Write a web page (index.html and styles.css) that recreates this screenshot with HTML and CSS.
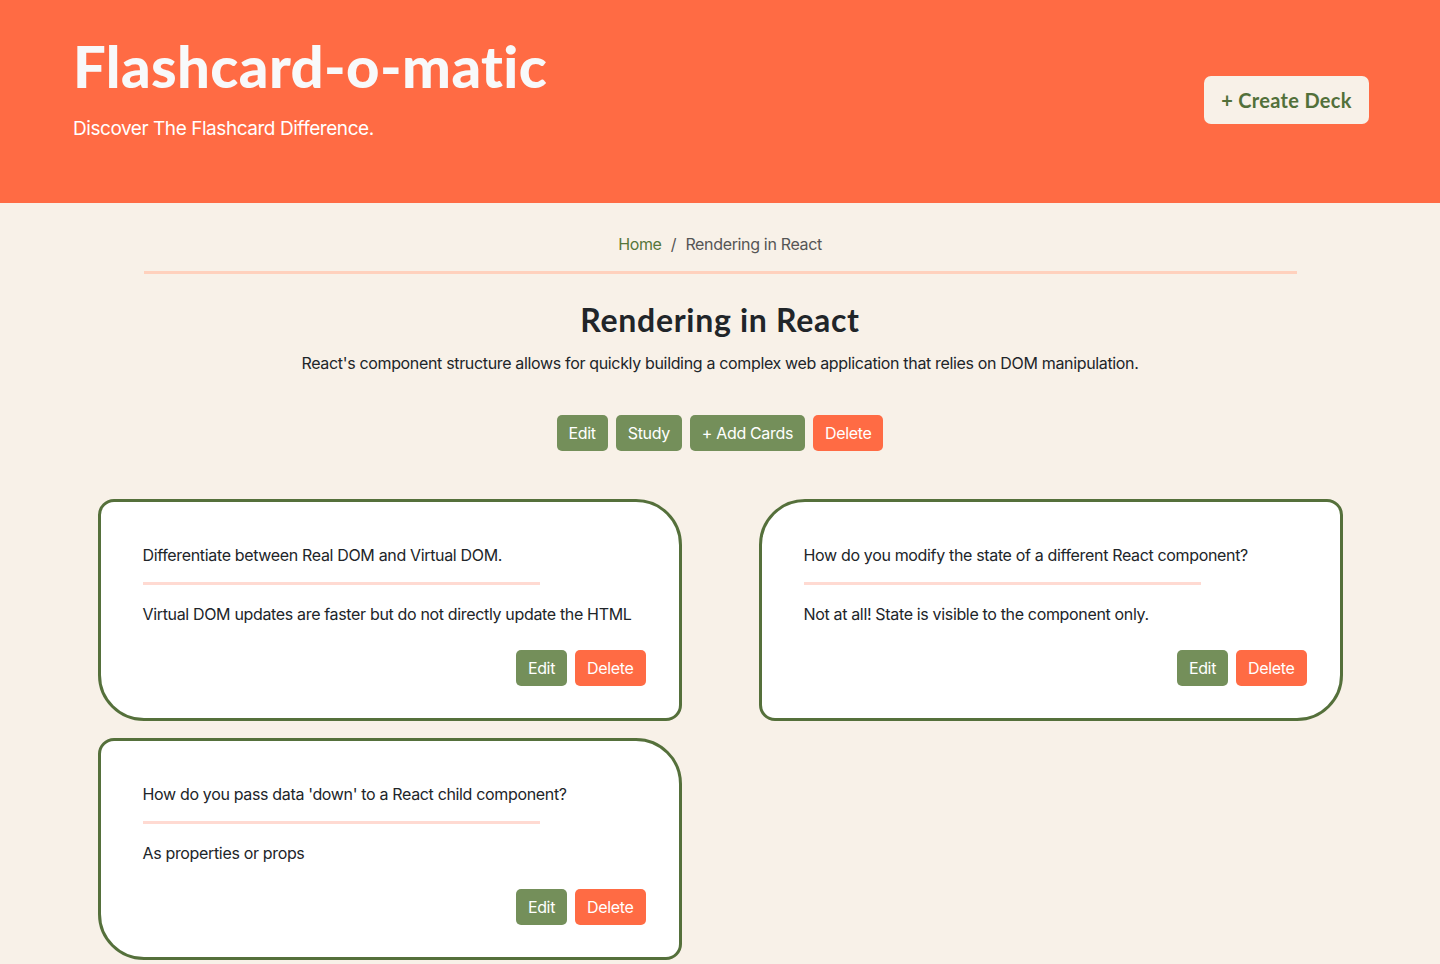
FILE: index.html
```html
<!DOCTYPE html>
<html lang="en">
<head>
<meta charset="utf-8">
<title>Flashcard-o-matic</title>
<link rel="stylesheet" href="styles.css">
</head>
<body>
<header class="site-header">
  <div class="brand">
    <h1 class="brand-title">Flashcard-o-matic</h1>
    <p class="brand-sub">Discover The Flashcard Difference.</p>
  </div>
  <button class="create-btn">+ Create Deck</button>
</header>
<main class="main">
  <nav class="crumbs">
    <a class="crumb-link" href="#">Home</a>
    <span class="crumb-sep">/</span>
    <span class="crumb-current">Rendering in React</span>
  </nav>
  <h2 class="deck-title">Rendering in React</h2>
  <p class="deck-desc">React's component structure allows for quickly building a complex web application that relies on DOM manipulation.</p>
  <div class="deck-actions">
    <button class="btn btn-green">Edit</button>
    <button class="btn btn-green">Study</button>
    <button class="btn btn-green">+ Add Cards</button>
    <button class="btn btn-orange">Delete</button>
  </div>
  <section class="cards">
    <article class="card">
      <p class="card-front">Differentiate between Real DOM and Virtual DOM.</p>
      <hr class="card-rule">
      <p class="card-back">Virtual DOM updates are faster but do not directly update the HTML</p>
      <div class="card-actions">
        <button class="btn btn-green">Edit</button>
        <button class="btn btn-orange">Delete</button>
      </div>
    </article>
    <article class="card">
      <p class="card-front">How do you modify the state of a different React component?</p>
      <hr class="card-rule">
      <p class="card-back">Not at all! State is visible to the component only.</p>
      <div class="card-actions">
        <button class="btn btn-green">Edit</button>
        <button class="btn btn-orange">Delete</button>
      </div>
    </article>
    <article class="card">
      <p class="card-front">How do you pass data 'down' to a React child component?</p>
      <hr class="card-rule">
      <p class="card-back">As properties or props</p>
      <div class="card-actions">
        <button class="btn btn-green">Edit</button>
        <button class="btn btn-orange">Delete</button>
      </div>
    </article>
  </section>
</main>
</body>
</html>
```

FILE: styles.css
```css
* { box-sizing: border-box; }

html, body {
  margin: 0;
  padding: 0;
}

body {
  background: #f8f1e8;
  font-family: Inter, "Noto Sans", sans-serif;
  font-size: 16px;
  line-height: 24px;
  letter-spacing: -0.34px;
  color: #212529;
}

.site-header {
  background: #ff6b44;
  height: 203px;
  display: flex;
  justify-content: space-between;
  align-items: flex-start;
  padding: 30px 71px 0 73px;
}

.brand-title {
  margin: 0;
  font-family: Lato, "Open Sans", sans-serif;
  font-weight: 900;
  font-size: 58px;
  line-height: 72px;
  letter-spacing: 0.4px;
  color: #f8f9fa;
}

.brand-sub {
  margin: 15px 0 0;
  font-size: 19px;
  line-height: 24px;
  color: #ffffff;
  letter-spacing: -0.45px;
}

.create-btn {
  margin-top: 46px;
  width: 165px;
  height: 48px;
  border: none;
  border-radius: 7px;
  background: #f8f1e8;
  color: #52703a;
  font-family: Lato, "Open Sans", sans-serif;
  font-weight: 700;
  font-size: 20px;
  letter-spacing: 0.3px;
  padding: 0;
}

.main {
  padding-top: 29px;
  text-align: center;
}

.crumbs {
  width: 1153px;
  margin: 0 auto;
  padding-bottom: 15px;
  border-bottom: 3px solid #ffd1bd;
  color: #555;
}

.crumb-link {
  color: #55763a;
  text-decoration: none;
}

.crumb-sep {
  margin: 0 5px;
  color: #555;
}

.crumb-current {
  color: #555;
}

.deck-title {
  margin: 26px 0 0;
  font-family: Lato, "Open Sans", sans-serif;
  font-weight: 700;
  font-size: 32px;
  line-height: 40px;
  letter-spacing: 0.7px;
  color: #212529;
}

.deck-desc {
  margin: 11px 0 0;
}

.deck-actions {
  margin-top: 40px;
  display: flex;
  justify-content: center;
  gap: 8px;
}

.btn {
  height: 36px;
  padding: 0 12px;
  border: none;
  border-radius: 5px;
  font-family: Inter, "Noto Sans", sans-serif;
  font-size: 16px;
  line-height: 24px;
  letter-spacing: -0.34px;
  color: #ffffff;
}

.btn-green { background: #748f5a; }
.btn-orange { background: #ff6b44; }

.cards {
  margin: 48px auto 0;
  width: 1245px;
  display: grid;
  grid-template-columns: 584px 584px;
  column-gap: 77px;
  row-gap: 17px;
  text-align: left;
}

.card {
  height: 222px;
  background: #ffffff;
  border: 3px solid #55703b;
  border-radius: 16px 46px 16px 46px;
  padding: 41px 33px 0 42px;
}

.card:nth-child(even) {
  border-radius: 46px 16px 46px 16px;
}

.card-front,
.card-back {
  margin: 0;
}

.card-rule {
  width: 397px;
  margin: 15px 0 17px;
  border: none;
  height: 3px;
  background: #ffdad2;
}

.card-actions {
  margin-top: 24px;
  display: flex;
  justify-content: flex-end;
  gap: 8px;
}
```
